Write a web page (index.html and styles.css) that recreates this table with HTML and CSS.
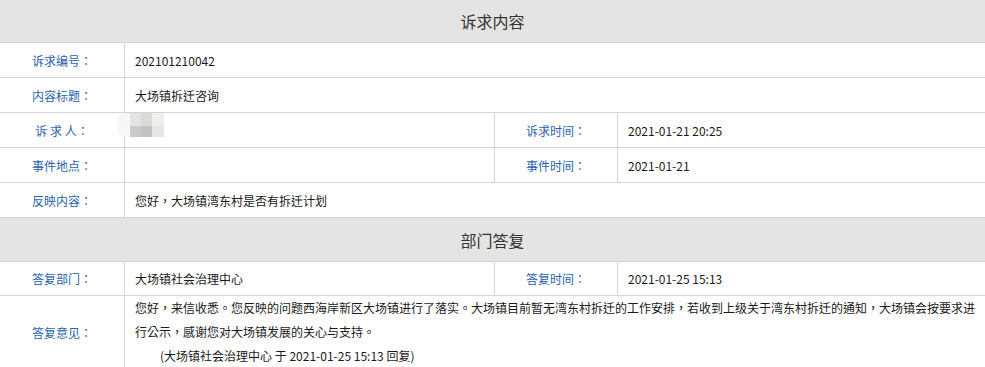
FILE: index.html
```html
<!DOCTYPE html>
<html>
<head>
<meta charset="utf-8">
<title>诉求内容</title>
<link rel="stylesheet" href="styles.css">
</head>
<body>
<div class="sheet">
  <div class="head">诉求内容</div>

  <div class="lab">诉求编号：</div>
  <div class="val span3">202101210042</div>

  <div class="lab">内容标题：</div>
  <div class="val span3">大场镇拆迁咨询</div>

  <div class="lab">诉&nbsp;求&nbsp;人：</div>
  <div class="val masked">
    <span class="mosaic">
      <i class="m0"></i><i class="m1"></i><i class="m2"></i><i class="m3"></i>
      <i class="m0b"></i><i class="m4"></i><i class="m5"></i><i class="m6"></i>
    </span>
  </div>
  <div class="lab">诉求时间：</div>
  <div class="val">2021-01-21 20:25</div>

  <div class="lab">事件地点：</div>
  <div class="val"></div>
  <div class="lab">事件时间：</div>
  <div class="val">2021-01-21</div>

  <div class="lab">反映内容：</div>
  <div class="val span3">您好，大场镇湾东村是否有拆迁计划</div>

  <div class="head">部门答复</div>

  <div class="lab">答复部门：</div>
  <div class="val">大场镇社会治理中心</div>
  <div class="lab">答复时间：</div>
  <div class="val">2021-01-25 15:13</div>

  <div class="lab">答复意见：</div>
  <div class="val span3 reply">
    <p>您好，来信收悉。您反映的问题西海岸新区大场镇进行了落实。大场镇目前暂无湾东村拆迁的工作安排，若收到上级关于湾东村拆迁的通知，大场镇会按要求进行公示，感谢您对大场镇发展的关心与支持。</p>
    <p class="sign">(大场镇社会治理中心 于 2021-01-25 15:13 回复)</p>
  </div>
</div>
</body>
</html>
```
FILE: styles.css
```css
html, body {
  margin: 0;
  padding: 0;
  background: #ffffff;
}
body {
  font-family: "Noto Sans CJK TC", "Noto Sans CJK SC", "Noto Sans", sans-serif;
  font-size: 12px;
  color: #1a1a1a;
}
.sheet {
  display: grid;
  grid-template-columns: 124px 369px 122px 1fr;
  grid-template-rows: 42px repeat(5, 34px) 43px 33px auto;
  gap: 1px;
  background: #d4d4d4;
}
.head {
  grid-column: 1 / -1;
  background: #e4e4e4;
  color: #333333;
  font-size: 16px;
  display: flex;
  align-items: center;
  justify-content: center;
}
.lab {
  background: #ffffff;
  color: #2862ae;
  display: flex;
  align-items: center;
  justify-content: center;
}
.val {
  background: #ffffff;
  display: flex;
  align-items: center;
  padding: 0 10px;
  white-space: nowrap;
}
.span3 {
  grid-column: 2 / -1;
}
.masked {
  position: relative;
}
.mosaic {
  position: absolute;
  left: -7px;
  top: 0;
  display: grid;
  grid-template-columns: 12px 11px 11px 12px;
  grid-template-rows: 13px 11px;
}
.mosaic i { display: block; }
.mosaic .m0 { background: #f6f6f6; border-radius: 6px 0 0 0; }
.mosaic .m0b { background: #f7f7f7; border-radius: 0 0 0 6px; }
.mosaic .m1 { background: #e6e4e3; }
.mosaic .m2 { background: #dcdad8; }
.mosaic .m3 { background: #eeeeed; }
.mosaic .m4 { background: #cdc9c6; }
.mosaic .m5 { background: #c5c1bd; }
.mosaic .m6 { background: #e7e5e3; }
.reply {
  display: block;
  white-space: normal;
  line-height: 24px;
}
.reply p {
  margin: 0;
}
.reply .sign {
  padding-left: 25px;
}
```
